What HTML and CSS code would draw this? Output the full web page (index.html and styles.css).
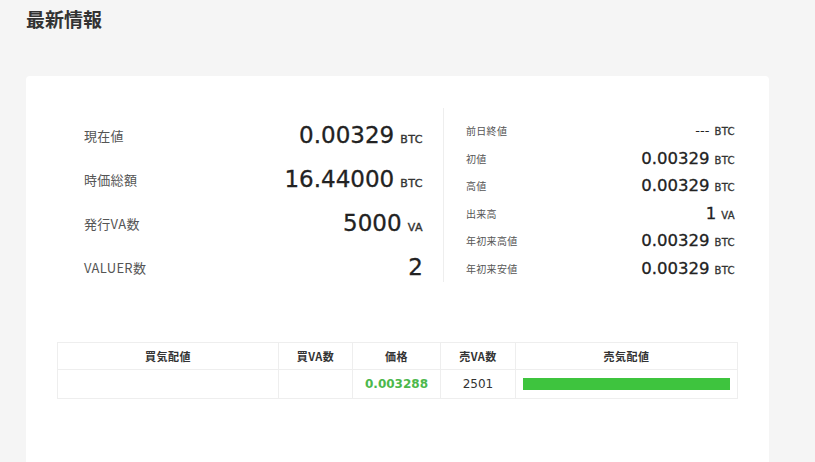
FILE: index.html
```html
<!DOCTYPE html>
<html lang="ja">
<head>
	<meta charset="UTF-8" />
	<title>最新情報</title>
	<link rel="stylesheet" href="styles.css">
</head>
<body>

<h1 class="titre">最新情報</h1>

<div class="carte">
	<div class="resume">
		<div class="volet-gauche">
			<div class="ligne">
				<span class="lbl">現在値</span>
				<span class="val">0.00329<span class="unite">BTC</span></span>
			</div>
			<div class="ligne">
				<span class="lbl">時価総額</span>
				<span class="val">16.44000<span class="unite">BTC</span></span>
			</div>
			<div class="ligne">
				<span class="lbl">発行VA数</span>
				<span class="val">5000<span class="unite">VA</span></span>
			</div>
			<div class="ligne">
				<span class="lbl">VALUER数</span>
				<span class="val">2</span>
			</div>
		</div>

		<div class="volet-droit">
			<div class="ligne-p">
				<span class="lbl-p">前日終値</span>
				<span class="val-p vide">---<span class="unite-p">BTC</span></span>
			</div>
			<div class="ligne-p">
				<span class="lbl-p">初値</span>
				<span class="val-p">0.00329<span class="unite-p">BTC</span></span>
			</div>
			<div class="ligne-p">
				<span class="lbl-p">高値</span>
				<span class="val-p">0.00329<span class="unite-p">BTC</span></span>
			</div>
			<div class="ligne-p">
				<span class="lbl-p">出来高</span>
				<span class="val-p">1<span class="unite-p">VA</span></span>
			</div>
			<div class="ligne-p">
				<span class="lbl-p">年初来高値</span>
				<span class="val-p">0.00329<span class="unite-p">BTC</span></span>
			</div>
			<div class="ligne-p">
				<span class="lbl-p">年初来安値</span>
				<span class="val-p">0.00329<span class="unite-p">BTC</span></span>
			</div>
		</div>
	</div>

	<table class="carnet">
		<colgroup>
			<col style="width:221px" />
			<col style="width:74px" />
			<col style="width:88px" />
			<col style="width:75px" />
			<col />
		</colgroup>
		<tr>
			<th>買気配値</th>
			<th>買VA数</th>
			<th>価格</th>
			<th>売VA数</th>
			<th>売気配値</th>
		</tr>
		<tr>
			<td></td>
			<td></td>
			<td class="prix">0.003288</td>
			<td>2501</td>
			<td class="cellule-barre"><div class="barre"></div></td>
		</tr>
	</table>
</div>

</body>
</html>
```

FILE: styles.css
```css
	body {
		margin:0;
		padding:8px 26px 0 26px;
		background-color:#f5f5f5;
		font-family:"Noto Sans CJK JP", "DejaVu Sans", sans-serif;
		color:#333;
		overflow:hidden;
	}
	.titre {
		margin:0;
		font-size:19px;
		line-height:22px;
		font-weight:bold;
		color:#333;
	}
	.carte {
		margin-top:46px;
		width:743px;
		height:386px;
		box-sizing:border-box;
		background-color:#fff;
		border-radius:4px 4px 0 0;
		padding:32px 31px 0 31px;
	}
	.resume {
		display:flex;
		align-items:flex-start;
	}
	.volet-gauche {
		width:386px;
		box-sizing:border-box;
		padding:5px 20px 0 27px;
	}
	.ligne {
		display:flex;
		justify-content:space-between;
		align-items:center;
		height:44px;
	}
	.lbl {
		font-size:13px;
		color:#555;
		letter-spacing:0.3px;
	}
	.val {
		font-family:"DejaVu Sans", sans-serif;
		font-size:23px;
		color:#222;
		-webkit-text-stroke:0.3px #222;
	}
	.unite {
		font-size:11px;
		margin-left:6px;
		letter-spacing:0.5px;
		-webkit-text-stroke:0.4px #333;
		color:#333;
	}
	.volet-droit {
		width:295px;
		box-sizing:border-box;
		border-left:1px solid #eee;
		padding:9px 3px 0 22px;
	}
	.ligne-p {
		display:flex;
		justify-content:space-between;
		align-items:center;
		height:27.5px;
	}
	.lbl-p {
		font-size:10px;
		color:#555;
		letter-spacing:0.3px;
	}
	.val-p {
		font-family:"DejaVu Sans", sans-serif;
		font-size:16.5px;
		color:#222;
		-webkit-text-stroke:0.3px #222;
	}
	.val-p.vide {
		font-size:13px;
		-webkit-text-stroke:0;
	}
	.unite-p {
		font-size:10px;
		margin-left:5px;
		letter-spacing:0.4px;
		-webkit-text-stroke:0.35px #333;
		color:#333;
	}
	.carnet {
		margin-top:53px;
		width:681px;
		border-collapse:collapse;
		table-layout:fixed;
	}
	.carnet th,
	.carnet td {
		border:1px solid #eee;
		text-align:center;
		padding:0;
	}
	.carnet th {
		height:26px;
		font-size:11px;
		font-weight:bold;
		color:#333;
		letter-spacing:0.5px;
	}
	.carnet td {
		height:28px;
		font-family:"DejaVu Sans", sans-serif;
		font-size:12px;
		color:#333;
	}
	.carnet td.prix {
		color:#4cb84c;
		font-weight:bold;
	}
	.cellule-barre {
		padding:0 7px 0 7px !important;
	}
	.barre {
		height:12px;
		background-color:#3ec43e;
	}
```
